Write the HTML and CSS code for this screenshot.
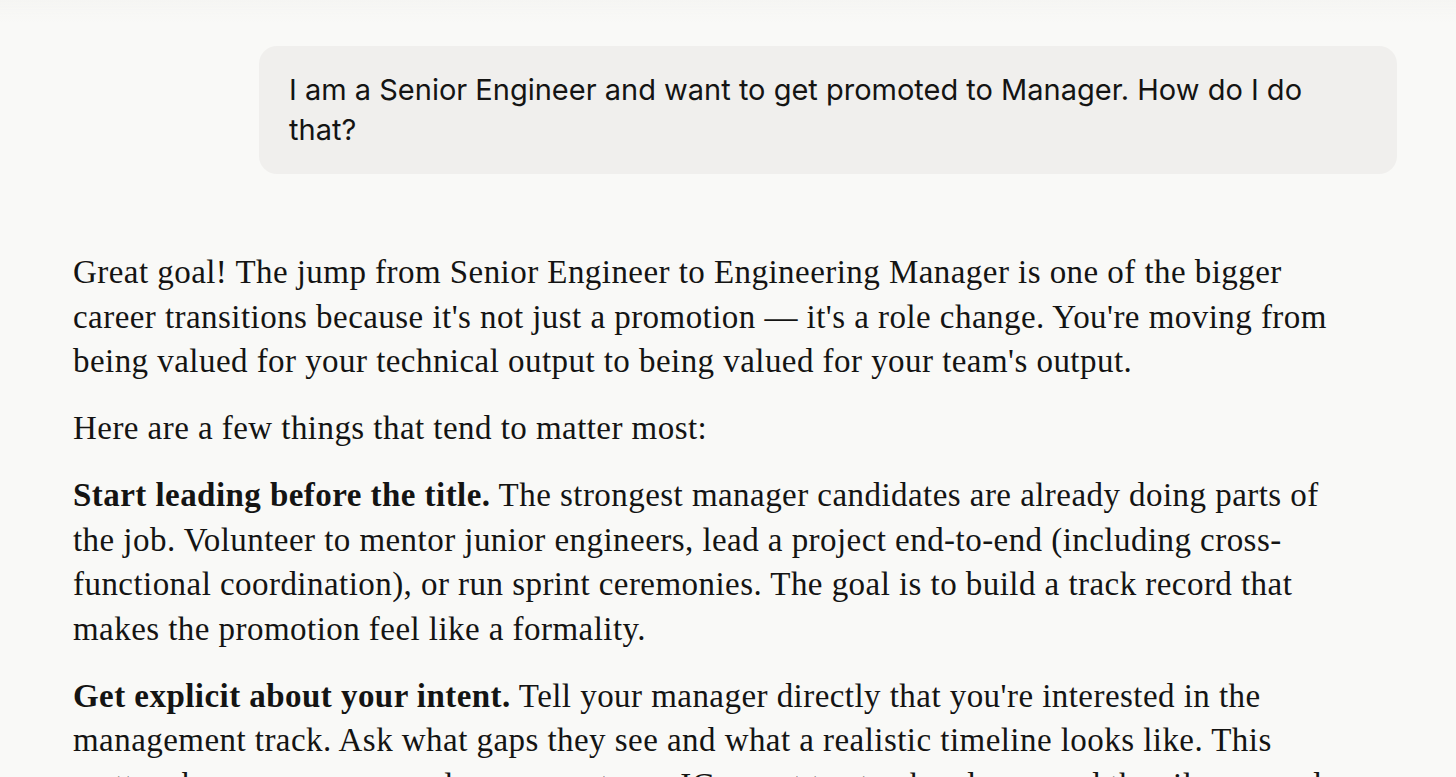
FILE: index.html
```html
<!DOCTYPE html>
<html lang="en">
<head>
<meta charset="utf-8">
<title>Chat</title>
<link rel="stylesheet" href="styles.css">
</head>
<body>
<div class="top-fade"></div>
<main class="thread">
  <div class="user-row">
    <div class="user-bubble">I am a Senior Engineer and want to get promoted to Manager. How do I do that?</div>
  </div>
  <div class="reply">
    <p>Great goal! The jump from Senior Engineer to Engineering Manager is one of the bigger career transitions because it's not just a promotion — it's a role change. You're moving from being valued for your technical output to being valued for your team's output.</p>
    <p>Here are a few things that tend to matter most:</p>
    <p><strong>Start leading before the title.</strong> The strongest manager candidates are already doing parts of the job. Volunteer to mentor junior engineers, lead a project end-to-end (including cross-functional coordination), or run sprint ceremonies. The goal is to build a track record that makes the promotion feel like a formality.</p>
    <p><strong>Get explicit about your intent.</strong> Tell your manager directly that you're interested in the management track. Ask what gaps they see and what a realistic timeline looks like. This matters because some people assume strong ICs want to stay hands-on, and the silence reads as a no.</p>
  </div>
</main>
</body>
</html>
```
FILE: styles.css
```css
html, body {
  margin: 0;
  padding: 0;
  background: #f9f9f7;
  color: #141413;
  overflow: hidden;
  height: 100%;
}

.top-fade {
  position: fixed;
  top: 0;
  left: 0;
  right: 0;
  height: 22px;
  background: linear-gradient(#f5f5f3, rgba(249, 249, 247, 0));
  pointer-events: none;
}

.thread {
  padding: 46px 59px 0 73px;
}

.user-row {
  display: flex;
  justify-content: flex-end;
}

.user-bubble {
  width: 1078px;
  background: #f0efed;
  border-radius: 18px;
  padding: 24px 30px;
  font-family: "Inter", "Liberation Sans", sans-serif;
  font-size: 29px;
  line-height: 40px;
  color: #141413;
}

.reply {
  margin-top: 76px;
  max-width: 1285px;
  font-family: "Liberation Serif", serif;
  font-size: 33px;
  line-height: 44.5px;
  letter-spacing: 0.45px;
}

.reply p {
  margin: 0 0 22.5px 0;
}

.reply strong {
  font-weight: 700;
}
```
